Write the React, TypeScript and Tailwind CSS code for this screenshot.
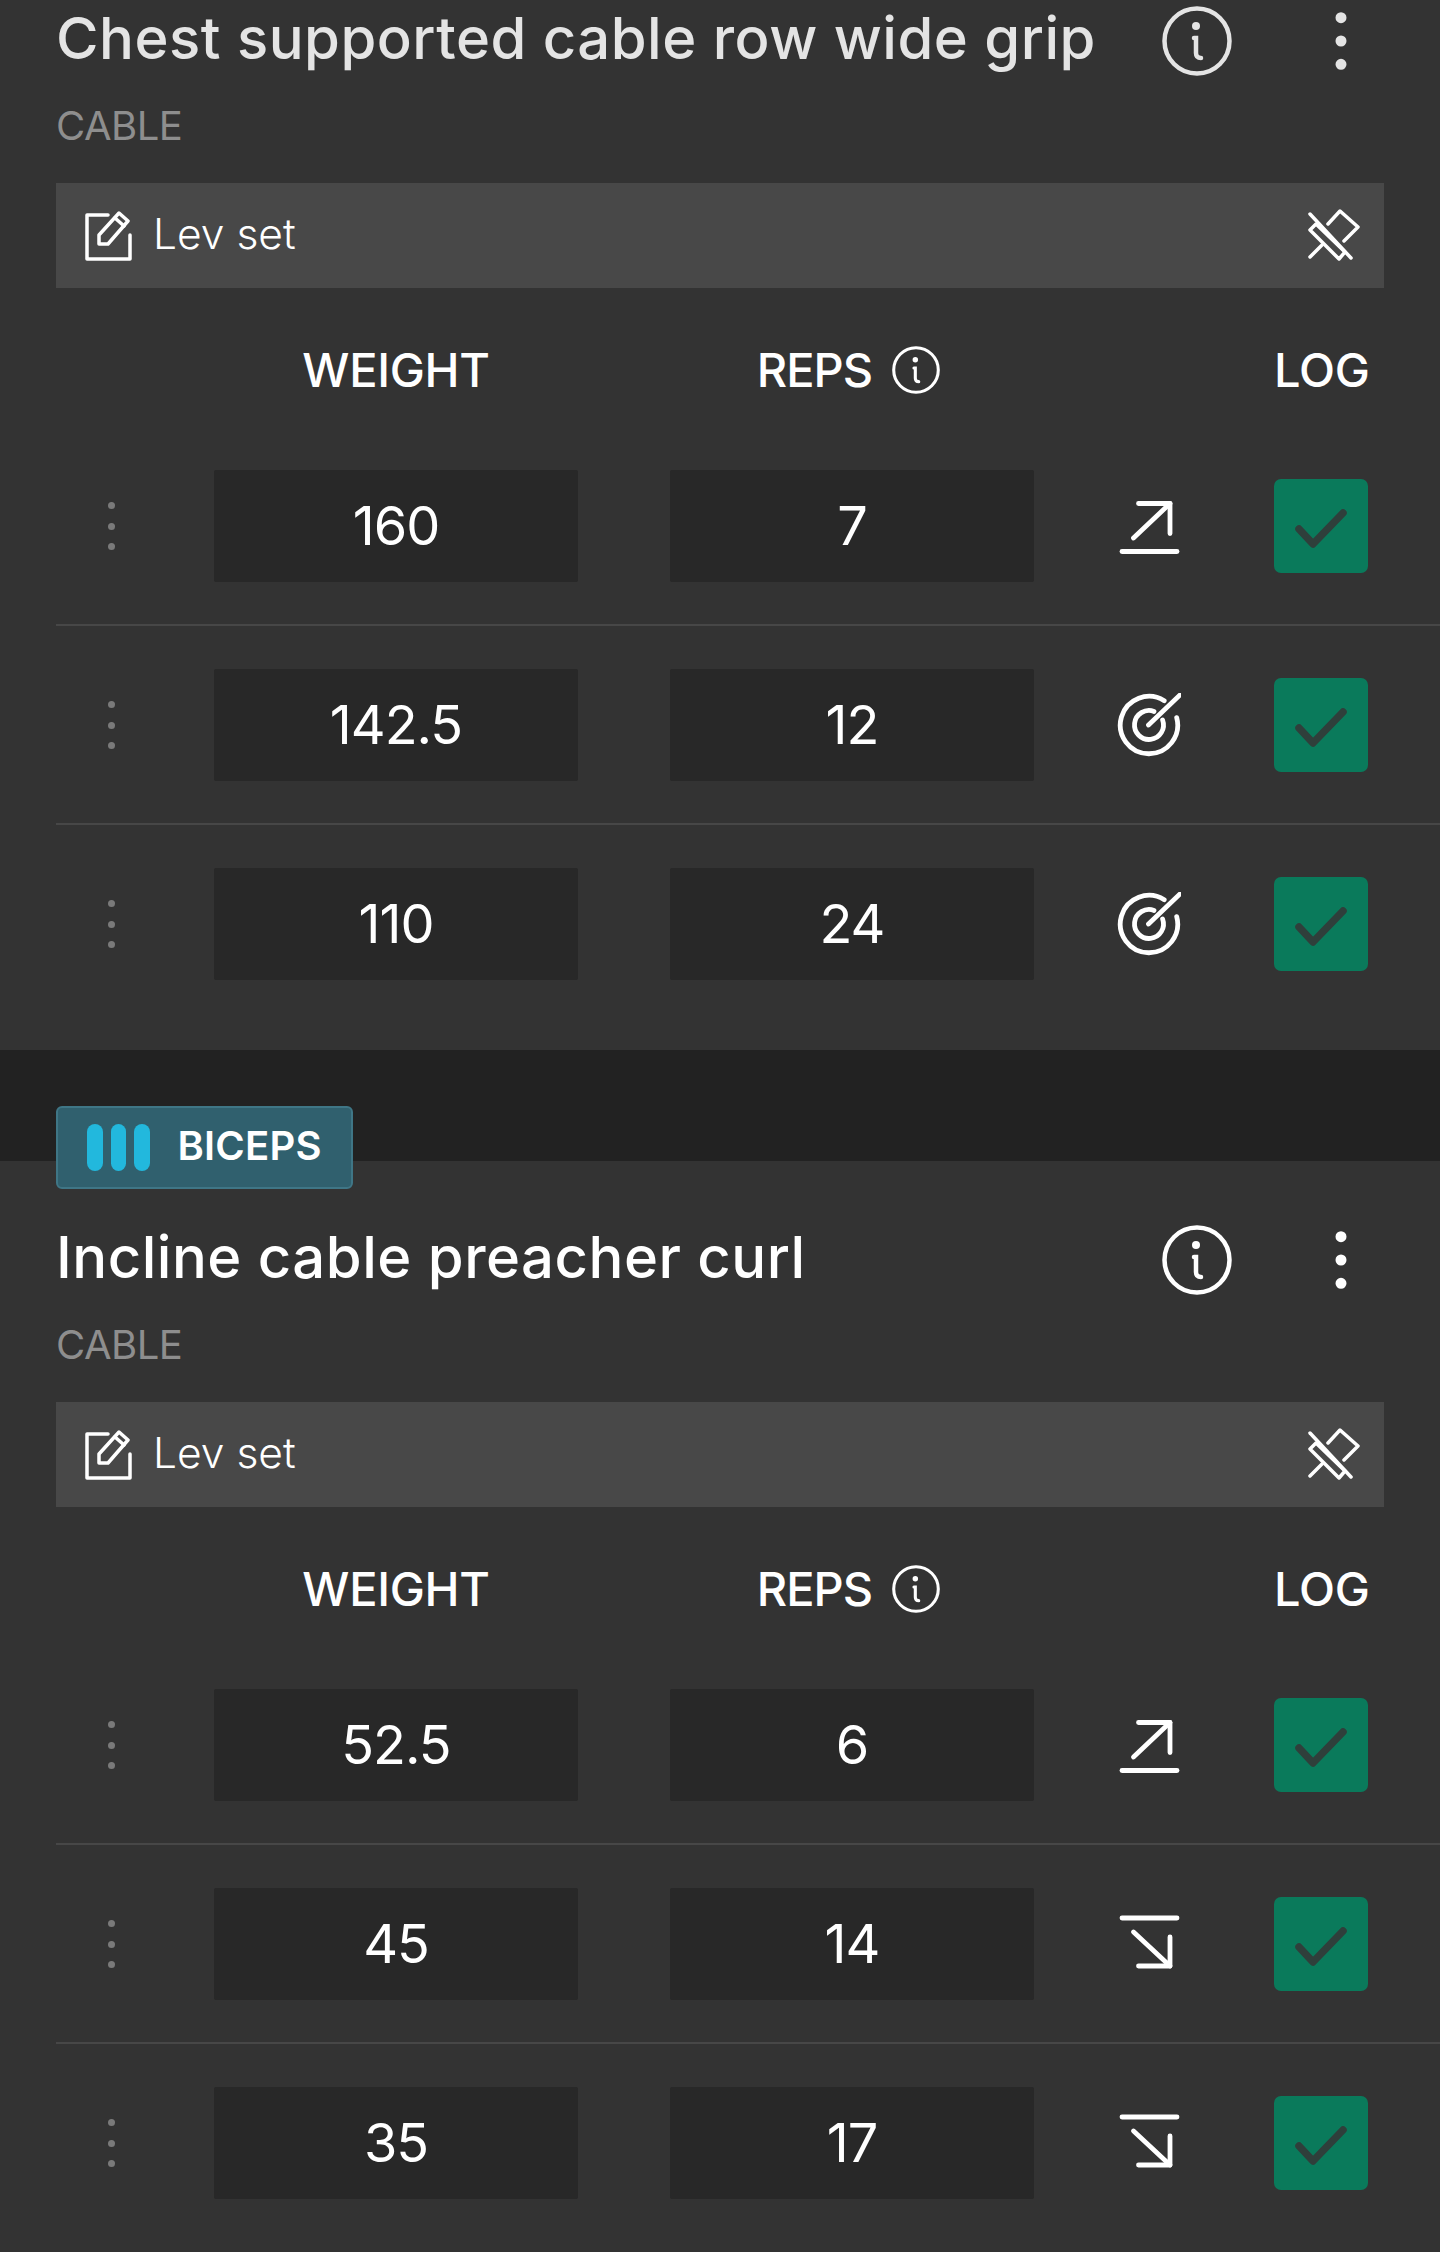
import { EllipsisVertical } from "lucide-react";

type Trend = "up" | "down" | "target";

const exercises = [
  {
    name: "Chest supported cable row wide grip",
    rows: [
      { weight: "160", reps: "7", trend: "up" as Trend },
      { weight: "142.5", reps: "12", trend: "target" as Trend },
      { weight: "110", reps: "24", trend: "target" as Trend },
    ],
  },
  {
    name: "Incline cable preacher curl",
    rows: [
      { weight: "52.5", reps: "6", trend: "up" as Trend },
      { weight: "45", reps: "14", trend: "down" as Trend },
      { weight: "35", reps: "17", trend: "down" as Trend },
    ],
  },
];

function InfoIcon({ className }: { className: string }) {
  return (
    <svg viewBox="0 0 70 70" fill="none" stroke="currentColor" strokeWidth="4.5" strokeLinecap="round" className={className}>
      <circle cx="35" cy="35" r="32.5" />
      <circle cx="34" cy="20" r="4" fill="currentColor" stroke="none" />
      <path d="M32 32h2v15q0 5 5 5" />
    </svg>
  );
}

function EditIcon() {
  return (
    <svg viewBox="0 0 50 50" fill="none" stroke="currentColor" strokeWidth="3.5" strokeLinejoin="round" strokeLinecap="round" className="h-[50px] w-[50px] text-white">
      <path d="M24 4H3v44h43V24" />
      <path d="M15 33v-9L35 2l9 8-20 23z" />
      <path d="M31 7l9 8" />
    </svg>
  );
}

function PinOffIcon() {
  return (
    <svg viewBox="0 0 52 52" fill="none" stroke="currentColor" strokeWidth="3.5" strokeLinejoin="round" strokeLinecap="round" className="mb-[2px] h-[52px] w-[52px] text-white">
      <path d="M2 5l41 44" />
      <path d="M20 15L32 2l18 16-14 14" />
      <path d="M2 21l6-6 29 28-6 7z" />
      <path d="M14 36L2 48" />
    </svg>
  );
}

function TrendIcon({ trend }: { trend: Trend }) {
  return (
    <svg viewBox="0 0 64 64" fill="none" stroke="currentColor" strokeWidth="4.8" strokeLinecap="round" strokeLinejoin="round" className="h-16 w-16 text-white">
      {trend === "up" && (
        <>
          <path d="M16.5 44L53 9.5" />
          <path d="M21.5 9.5H53v30" />
          <path d="M5 57.5h55" />
        </>
      )}
      {trend === "down" && (
        <>
          <path d="M5 6h55" />
          <path d="M16.5 20L53 54" />
          <path d="M21.5 54H53V25" />
        </>
      )}
      {trend === "target" && (
        <>
          <path d="M47.2 7.7A28.7 28.7 0 1 0 59.7 24.6" />
          <path d="M37 18.4A14.5 14.5 0 1 0 45.6 27" />
          <path d="M31.5 32L63 2" />
        </>
      )}
    </svg>
  );
}

function LogBox() {
  return (
    <div className="h-[94px] w-[94px] rounded-[7px] bg-[#0a7a5b]">
      <svg viewBox="0 0 94 94" fill="none" stroke="#2f3f3b" strokeWidth="7.5" strokeLinecap="round" strokeLinejoin="round" className="h-[94px] w-[94px]">
        <path d="M25 50l14 15 30-31" />
      </svg>
    </div>
  );
}

function SetRow({ weight, reps, trend, last }: { weight: string; reps: string; trend: Trend; last: boolean }) {
  return (
    <div className={last ? "pt-[43px]" : "border-b-2 border-[#474747] pt-[43px] pb-[42px]"}>
      <div className="flex h-[112px] items-center">
        <div className="flex w-[158px] flex-col gap-[13.5px] pl-[52px]">
          <span className="h-[7px] w-[7px] rounded-full bg-[#7a7a7a]" />
          <span className="h-[7px] w-[7px] rounded-full bg-[#7a7a7a]" />
          <span className="h-[7px] w-[7px] rounded-full bg-[#7a7a7a]" />
        </div>
        <div className="flex h-[112px] w-[364px] items-center justify-center rounded-[2px] bg-[#282828] pb-[2px] text-[54px] tracking-[-1px] text-white">
          {weight}
        </div>
        <div className="ml-[92px] flex h-[112px] w-[364px] items-center justify-center rounded-[2px] bg-[#282828] pb-[2px] text-[54px] tracking-[-1px] text-white">
          {reps}
        </div>
        <div className="flex w-[240px] justify-center pr-[10px]">
          <TrendIcon trend={trend} />
        </div>
        <LogBox />
      </div>
    </div>
  );
}

function ExerciseCard({ index }: { index: number }) {
  const ex = exercises[index];
  const first = index === 0;
  return (
    <section className={first ? "bg-[#333333] pb-[70px]" : "relative bg-[#333333] pt-[58px] pb-[54px]"}>
      {!first && (
        <div className="absolute top-[-55px] left-[56px] flex h-[83px] w-[297px] items-center gap-[28px] rounded-[6px] border-2 border-[#3f7686] bg-[#30606e] pl-[29px]">
          <div className="flex gap-[8px]">
            <span className="h-[47px] w-[15.5px] rounded-full bg-[#22b8dd]" />
            <span className="h-[47px] w-[15.5px] rounded-full bg-[#22b8dd]" />
            <span className="h-[47px] w-[15.5px] rounded-full bg-[#22b8dd]" />
          </div>
          <span className="mb-[4px] text-[40px] font-semibold tracking-[0.2px] text-white">BICEPS</span>
        </div>
      )}

      <div className={first ? "flex h-[78px] items-center pl-[56px] text-[#e4e4e4]" : "flex h-[78px] items-center pl-[56px] text-white"}>
        <h2 className="mb-[2px] w-[1106px] text-[58px] font-medium tracking-[0.5px] whitespace-nowrap">{ex.name}</h2>
        <InfoIcon className="mt-[4px] h-[70px] w-[70px]" />
        <EllipsisVertical size={80} strokeWidth={1.3} className="mt-[4px] ml-[69px] fill-current" />
      </div>

      <div className="mt-[23px] ml-[56px] h-[50px] text-[40px] leading-[50px] tracking-[-0.5px] text-[#8e8e8e]">CABLE</div>

      <div className="mx-[56px] mt-[32px] flex h-[105px] items-center justify-between bg-[#484848] pr-[24px] pl-[28px]">
        <div className="flex items-center gap-[19px]">
          <EditIcon />
          <span className="mb-[4px] text-[42.5px] font-light text-white">Lev set</span>
        </div>
        <PinOffIcon />
      </div>

      <div className="mt-[52px] flex h-[60px] items-center pl-[214px] text-[47px] font-medium tracking-[-0.3px] text-white">
        <div className="w-[364px] text-center">WEIGHT</div>
        <div className="ml-[92px] flex w-[364px] items-center justify-center gap-[20px] pr-[7px]">
          <span className="tracking-[-1px]">REPS</span>
          <InfoIcon className="h-[48px] w-[48px]" />
        </div>
        <div className="ml-[240px] w-[94px] text-center">LOG</div>
      </div>

      <div className="mt-[27px] ml-[56px]">
        {ex.rows.map((r, i) => (
          <SetRow key={i} {...r} last={i === ex.rows.length - 1} />
        ))}
      </div>
    </section>
  );
}

export default function App() {
  return (
    <div className="h-[2252px] overflow-hidden bg-[#222222] font-[Inter,sans-serif]">
      <ExerciseCard index={0} />
      <div className="h-[111px]" />
      <ExerciseCard index={1} />
    </div>
  );
}
